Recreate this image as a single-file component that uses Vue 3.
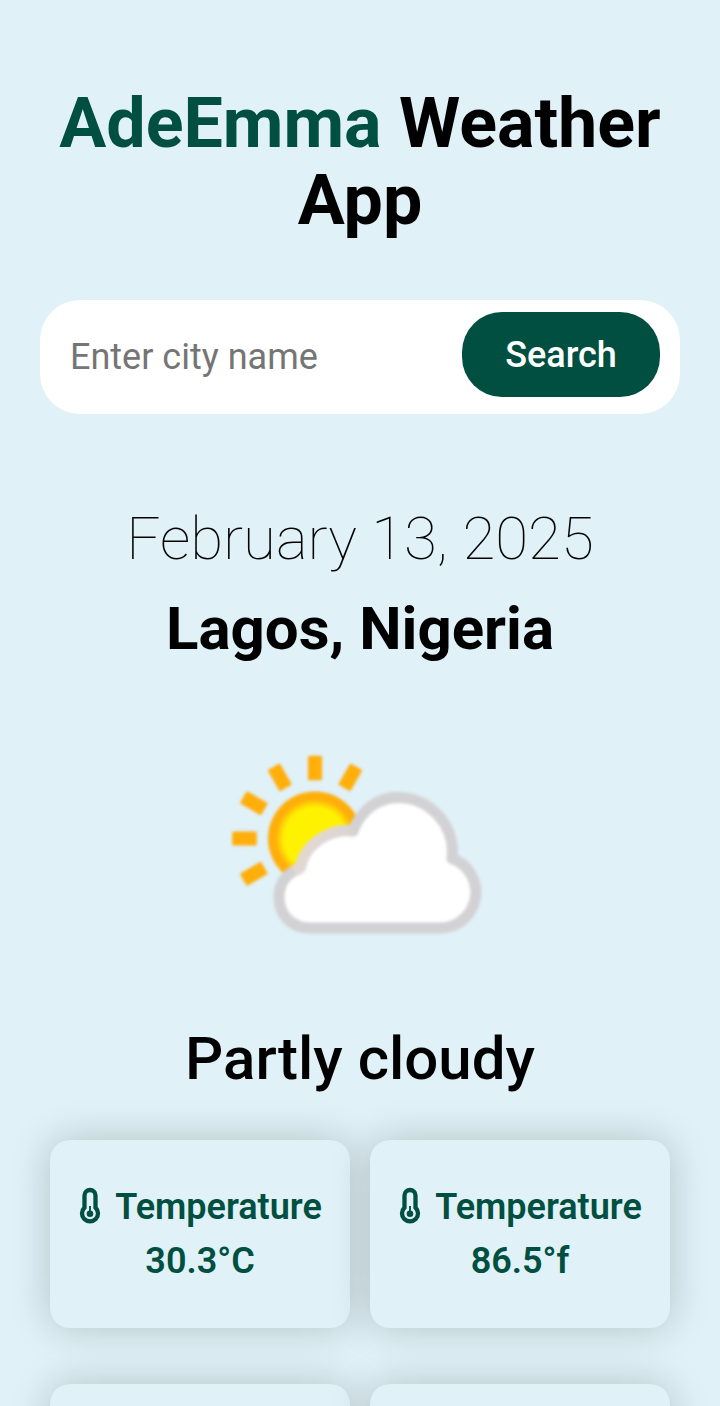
<script setup>
const cards = [
  { label: 'Temperature', value: '30.3°C' },
  { label: 'Temperature', value: '86.5°f' },
  { label: '', value: '' },
  { label: '', value: '' }
]
const rays = [30, 0, -30, -60, -90, -120]
</script>

<template>
  <main class="page">
    <h1 class="title"><span class="brand">AdeEmma</span> Weather App</h1>

    <form class="search" @submit.prevent>
      <input class="city" type="text" placeholder="Enter city name" />
      <button class="go" type="submit">Search</button>
    </form>

    <section class="summary">
      <p class="date">February 13, 2025</p>
      <h2 class="place">Lagos, Nigeria</h2>
      <svg class="sky" viewBox="0 0 300 230" width="300" height="230">
        <defs>
          <radialGradient id="sun" gradientUnits="userSpaceOnUse" cx="105" cy="108.5" r="47">
            <stop offset="0.66" stop-color="#fff200" />
            <stop offset="0.84" stop-color="#ffae0a" />
          </radialGradient>
          <linearGradient id="rim" gradientUnits="userSpaceOnUse" x1="104" y1="112" x2="146" y2="136">
            <stop offset="0" stop-color="#e2d8d2" />
            <stop offset="1" stop-color="#d2d1d3" />
          </linearGradient>
        </defs>
        <circle cx="105" cy="108.5" r="47" fill="url(#sun)" />
        <rect
          v-for="angle in rays"
          :key="angle"
          x="98"
          y="25.7"
          width="14"
          height="24.5"
          rx="1.5"
          fill="#ffae0a"
          :transform="`rotate(${angle} 105 108.5)`"
        />
        <path
          d="M100 198H231A35.8 35.8 0 0 0 242 128.5A54.5 54.5 0 0 0 188 67.5C168 67.5 151 80 143 101C121 98 95 113 90 138C77 143 69 153 69 167C69 185 82 198 100 198Z"
          fill="#fff"
          stroke="#d2d1d3"
          stroke-width="11"
          stroke-linejoin="round"
        />
        <path
          d="M84 141L90 138C95 113 121 98 143 101"
          fill="none"
          stroke="url(#rim)"
          stroke-width="11"
          stroke-linejoin="round"
        />
      </svg>
      <p class="condition">Partly cloudy</p>
    </section>

    <section class="cards">
      <article v-for="(card, i) in cards" :key="i" class="card">
        <template v-if="card.label">
          <p class="line">
            <svg class="thermo" viewBox="0 0 22 38" width="22" height="38">
              <path
                d="M5.5 8.5a5.5 5.5 0 0 1 11 0V20.6a8 8 0 1 1-11 0Z"
                fill="none"
                stroke="currentColor"
                stroke-width="4.3"
              />
              <circle cx="11" cy="26.8" r="3.3" fill="currentColor" />
              <path d="M11 19v7" stroke="currentColor" stroke-width="1.9" />
            </svg>
            <span>{{ card.label }}</span>
          </p>
          <p class="line">{{ card.value }}</p>
        </template>
      </article>
    </section>
  </main>
</template>

<style>
html,
body {
  margin: 0;
  background: #e0f1f8;
}
body {
  overflow: hidden;
}
</style>

<style scoped>
.page {
  box-sizing: border-box;
  height: 1406px;
  overflow: hidden;
  padding: 85px 40px 0;
  background: #e0f1f8;
  color: #000;
  font-family: Roboto, "Liberation Sans", sans-serif;
  text-align: center;
}
.title {
  margin: 0;
  font-size: 70px;
  line-height: 77px;
  font-weight: 700;
}
.brand {
  color: #004f40;
}
.search {
  box-sizing: border-box;
  display: flex;
  align-items: flex-start;
  height: 114px;
  margin-top: 61px;
  padding: 12px 20px 0 30px;
  border-radius: 40px;
  background: #fff;
}
.city {
  flex: 1;
  min-width: 0;
  height: 89px;
  padding: 0;
  border: 0;
  outline: 0;
  background: transparent;
  font: 400 36px Roboto, "Liberation Sans", sans-serif;
}
.city::placeholder {
  color: #757575;
}
.go {
  width: 198px;
  height: 85px;
  padding: 0;
  border: 0;
  border-radius: 40px;
  background: #004f40;
  color: #fff;
  font: 500 36px Roboto, "Liberation Sans", sans-serif;
}
.summary {
  display: flex;
  flex-direction: column;
  align-items: center;
  margin-top: 80px;
}
.date,
.place,
.condition {
  margin: 0;
  font-size: 60px;
  line-height: 90px;
}
.date {
  font-weight: 100;
}
.place {
  font-weight: 700;
}
.condition {
  font-weight: 500;
}
.sky {
  display: block;
  margin: 56px 0 54px;
  filter: blur(1.7px);
}
.cards {
  display: grid;
  grid-template-columns: 300px 300px;
  justify-content: center;
  gap: 56px 20px;
  margin-top: 36px;
}
.card {
  box-sizing: border-box;
  height: 188px;
  padding: 40px 0;
  border-radius: 20px;
  background: #e0f1f8;
  box-shadow: 0 0 40px rgba(0, 20, 0, 0.2);
  color: #004f40;
}
.line {
  display: flex;
  justify-content: center;
  align-items: center;
  gap: 15px;
  margin: 0;
  font-size: 36px;
  line-height: 54px;
  font-weight: 600;
}
.thermo {
  margin: -3px -1px 0 1px;
}
</style>
